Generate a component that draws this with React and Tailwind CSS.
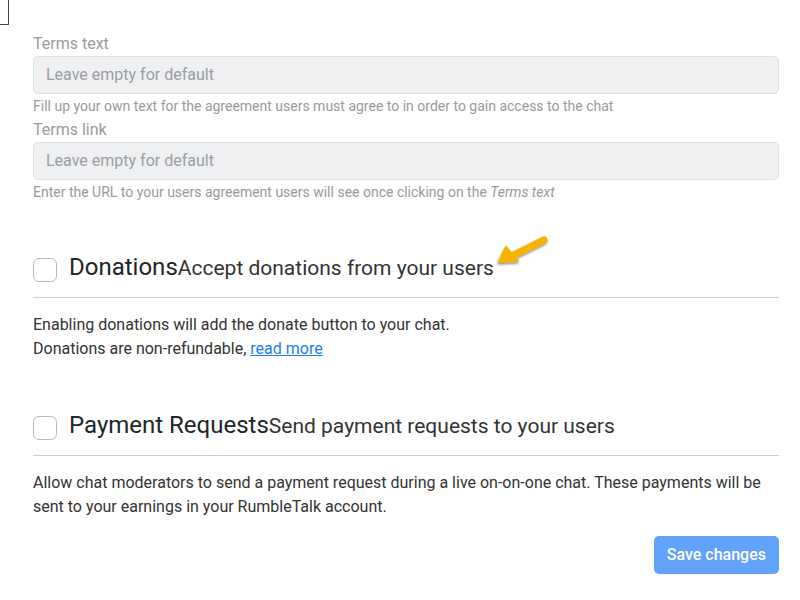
import React from 'react';

function Field({ label, help }) {
    return (
        <div>
            <div className="text-[16px] leading-[22px] text-[#9a9a9a] mb-[1px]">{label}</div>
            <div className="h-[38px] flex items-center pl-[12px] bg-[#eff0f2] border border-[#dcdfe3] rounded-[5px] text-[16px] text-[#9a9da2]">
                Leave empty for default
            </div>
            <div className="text-[14px] leading-[18px] mt-[3px] text-[#9a9a9a]">{help}</div>
        </div>
    );
}

function Arrow() {
    return (
        <svg className="absolute left-[461px] top-[-17px]" width="60" height="40" viewBox="0 0 60 40">
            <defs>
                <filter id="sh" x="-30%" y="-30%" width="160%" height="160%">
                    <feDropShadow dx="-0.5" dy="1.5" stdDeviation="1.2" floodColor="#000" floodOpacity="0.5" />
                </filter>
            </defs>
            <g filter="url(#sh)">
                <path d="M50 7 L18 23" stroke="#f5b400" strokeWidth="7" strokeLinecap="round" fill="none" />
                <path d="M5 29 L12 14 L24 28 Z" fill="#f5b400" stroke="#f5b400" strokeWidth="2" strokeLinejoin="round" />
            </g>
        </svg>
    );
}

function SectionHead({ title, sub, arrow }) {
    return (
        <>
            <div className="relative h-[40px] flex items-center">
                <div className="w-[24px] h-[24px] shrink-0 border border-[#b8bcc0] rounded-[6px] bg-white" />
                <div className="ml-[12px] -mt-[7px] flex items-baseline text-[#212529]">
                    <span className="text-[24px]">{title}</span>
                    <span className="text-[21px] text-[#333]">{sub}</span>
                </div>
                {arrow && <Arrow />}
            </div>
            <div className="mt-[7px] border-t border-[#cfcfcf]" />
        </>
    );
}

export default function App() {
    return (
        <div className="relative min-h-[600px] bg-white" style={{ fontFamily: 'Roboto, "Liberation Sans", sans-serif' }}>
            <div className="absolute left-0 top-0 w-[9px] h-[25px] border-r border-b border-[#444]" />
            <div className="pt-[33px] pl-[33px] pr-[21px]">
                <Field label="Terms text" help="Fill up your own text for the agreement users must agree to in order to gain access to the chat" />
                <div className="mt-[4px]">
                    <Field
                        label="Terms link"
                        help={<>Enter the URL to your users agreement users will see once clicking on the <i>Terms text</i></>}
                    />
                </div>

                <div className="mt-[49px]">
                    <SectionHead title="Donations" sub="Accept donations from your users" arrow />
                </div>
                <div className="mt-[15px] text-[16px] leading-[24px] text-[#333]">
                    <div>Enabling donations will add the donate button to your chat.</div>
                    <div>
                        Donations are non-refundable, <a href="#" className="text-[#1a7cf5] underline">read more</a>
                    </div>
                </div>

                <div className="mt-[47px]">
                    <SectionHead title="Payment Requests" sub="Send payment requests to your users" />
                </div>
                <div className="mt-[15px] text-[16px] leading-[24px] text-[#333]">
                    Allow chat moderators to send a payment request during a live on-on-one chat. These payments will be sent to your earnings in your RumbleTalk account.
                </div>

                <div className="mt-[17px] flex justify-end">
                    <button className="h-[38px] px-[13px] rounded-[5px] bg-[#60a2fc] text-white text-[16px] font-medium">Save changes</button>
                </div>
            </div>
        </div>
    );
}
